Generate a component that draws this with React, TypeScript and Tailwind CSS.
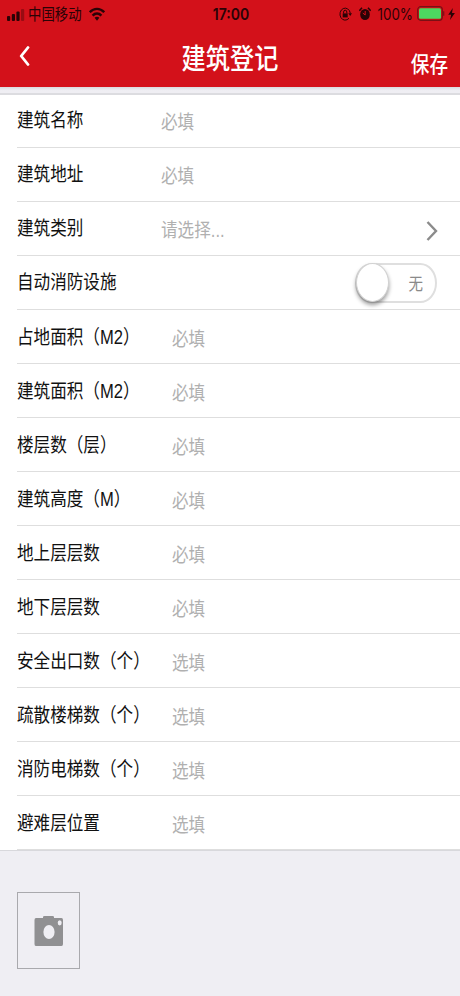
import { useState } from 'react';

const fields = [
	{ label: '建筑名称', hint: '必填' },
	{ label: '建筑地址', hint: '必填' },
	{ label: '建筑类别', hint: '请选择...', type: 'select' },
	{ label: '自动消防设施', hint: '', type: 'switch' },
	{ label: '占地面积（M2）', hint: '必填', wide: true },
	{ label: '建筑面积（M2）', hint: '必填', wide: true },
	{ label: '楼层数（层）', hint: '必填', wide: true },
	{ label: '建筑高度（M）', hint: '必填', wide: true },
	{ label: '地上层层数', hint: '必填', wide: true },
	{ label: '地下层层数', hint: '必填', wide: true },
	{ label: '安全出口数（个）', hint: '选填', wide: true },
	{ label: '疏散楼梯数（个）', hint: '选填', wide: true },
	{ label: '消防电梯数（个）', hint: '选填', wide: true },
	{ label: '避难层位置', hint: '选填', wide: true },
];

const StatusBar = () => (
	<div className="grid grid-cols-3 items-center h-7 pl-[7px] pr-[5px] text-[#2a0306]">
		<div className="flex items-center">
			<svg width="18" height="13" viewBox="0 0 18 13" fill="currentColor">
				<rect x="0" y="8" width="3.2" height="5" rx="1" />
				<rect x="4.8" y="6" width="3.2" height="7" rx="1" />
				<rect x="9.4" y="3.5" width="3.2" height="9.5" rx="1" />
				<rect x="14" y="1" width="3.2" height="12" rx="1" opacity="0.35" />
			</svg>
			<span className="ml-[3px] pt-[2px] text-[13.4px] leading-none scale-y-[1.2]">中国移动</span>
			<svg className="ml-[7px]" width="16" height="14" viewBox="0 0 16 14" fill="none" stroke="currentColor" strokeWidth="2.4">
				<path d="M0.8 5.2C5 0.7 11 0.7 15.2 5.2" />
				<path d="M3.6 8.6C6.2 5.8 9.8 5.8 12.4 8.6" />
				<path d="M5.6 10.8C7 9.5 9 9.5 10.4 10.8L8 13.7Z" fill="currentColor" stroke="none" />
			</svg>
		</div>
		<div className="text-center text-[14px] leading-none font-semibold font-['Inter'] scale-y-[1.15]">17:00</div>
		<div className="flex items-center justify-end">
			<svg width="13" height="14" viewBox="0 0 13 14" fill="none" stroke="currentColor" strokeWidth="1">
				<path d="M10 11.2A5.2 6 0 1 1 11.3 6.2" />
				<path d="M9.3 6.2H13L11.2 9Z" fill="currentColor" stroke="none" />
				<rect x="3.7" y="6.4" width="5" height="4" fill="currentColor" stroke="none" />
				<path d="M4.6 6.5V5a1.6 1.8 0 0 1 3.2 0v1.5" />
			</svg>
			<svg className="ml-[7px]" width="12" height="14" viewBox="0 0 12 14" fill="currentColor">
				<ellipse cx="6" cy="7.5" rx="4.8" ry="5.6" />
				<path d="M0.3 3.8L3 0.8M11.7 3.8L9 0.8" stroke="currentColor" strokeWidth="1.6" />
				<path d="M6.2 4V8L3.8 6" fill="none" stroke="#d3111a" strokeWidth="1" />
			</svg>
			<span className="ml-[6px] text-[13.4px] font-['Inter'] scale-y-[1.15]">100%</span>
			<svg className="ml-[4px]" width="28" height="15" viewBox="0 0 28 15">
				<rect x="0.7" y="0.7" width="24.6" height="13.6" rx="3" fill="none" stroke="#7a1015" strokeWidth="1.2" />
				<rect x="2" y="2.2" width="22" height="10.6" rx="1.5" fill="#4cd760" />
				<path d="M26.7 5.2v4.6" stroke="#7a1015" strokeWidth="1.2" />
			</svg>
			<svg className="ml-[3px]" width="7" height="12" viewBox="0 0 7 12" fill="currentColor">
				<path d="M4.8 0L0.2 6.8H3.1L2 12L6.9 5H4Z" />
			</svg>
		</div>
	</div>
);

const Header = () => (
	<header className="h-[87px] bg-[#d3111a]">
		<StatusBar />
		<div className="grid grid-cols-3 items-center h-[59px] px-[12px] text-white">
			<button className="justify-self-start pl-[7px] pb-[3px]">
				<svg width="11" height="20" viewBox="0 0 11 20" fill="none" stroke="currentColor" strokeWidth="2.8" strokeLinecap="round" strokeLinejoin="round">
					<path d="M9 1.5L2.2 10L9 18.5" />
				</svg>
			</button>
			<h1 className="pt-[3px] text-center text-[24.2px] leading-none font-medium whitespace-nowrap scale-y-[1.16]">建筑登记</h1>
			<button className="justify-self-end pt-[13px] text-[18.6px] leading-none font-medium scale-y-[1.16]">保存</button>
		</div>
	</header>
);

const Switch = () => {
	const [on, setOn] = useState(false);

	return (
		<button
			onClick={() => setOn(!on)}
			className={`flex items-center justify-between w-[82px] h-[40px] mr-[23px] rounded-[20px/24px] border-2 border-[#dfdfdf] text-[#8a8a8a] ${on ? 'flex-row-reverse' : ''}`}
		>
			<span className="w-[33px] h-[39px] -ml-[1px] shrink-0 rounded-[50%] bg-white border border-[#d2d2d2] shadow-[0_3px_4px_rgba(0,0,0,0.4)]" />
			<span className="mr-[12px] pt-[3px] text-[14.5px] leading-none scale-y-[1.2]">{on ? '有' : '无'}</span>
		</button>
	);
};

const App = () => {
	return (
		<div className="flex flex-col h-[996px] w-[460px] overflow-hidden bg-[#efeef3] font-['Liberation_Sans','Noto_Sans_CJK_SC',sans-serif]">
			<Header />
			<div className="h-[8px] shrink-0 bg-linear-to-b from-[#d9d9dc] to-[#efeef3] to-60% border-b-2 border-[#dcdce0]" />
			<main className="bg-white border-b border-[#d8d8dc]">
				{fields.map((field) => (
					<div key={field.label} className="pl-[17px] h-[53px] not-first:h-[54px]">
						<div className="flex items-center h-full border-b border-[#dedede]">
							<span className={`shrink-0 text-[16.6px] leading-none text-[#111] whitespace-nowrap ${field.wide ? 'w-[155px] pt-[3px]' : 'w-[144px] pt-[1px]'}`}>
								<span className="inline-block scale-y-[1.18]">{field.label}</span>
							</span>
							<span className={`flex-1 text-[16.6px] leading-none text-[#b0b0b0] ${field.wide ? 'pt-[7px]' : 'pt-[5px]'}`}>
								<span className="inline-block scale-y-[1.18]">{field.hint}</span>
							</span>
							{field.type === 'select' && (
								<svg className="mr-[22px] mt-[5px]" width="12" height="20" viewBox="0 0 12 20" fill="none" stroke="#8b8b8b" strokeWidth="2.4">
									<path d="M1.5 1L10 10L1.5 19" />
								</svg>
							)}
							{field.type === 'switch' && <Switch />}
						</div>
					</div>
				))}
			</main>
			<div className="pt-[41px] pl-[17px]">
				<button className="flex items-center justify-center w-[63px] h-[77px] border border-[#a9a9ad]">
					<svg width="30" height="32" viewBox="0 0 30 32">
						<path
							fill="#909092"
							fillRule="evenodd"
							d="M2 3H9V2Q9 1 10.5 1H18.5Q20 1 20 2V3H27.5Q29 3 29 5V29Q29 31 27.5 31H1.8Q0.5 31 0.5 29V5Q0.5 3 2 3ZM15 10A5.6 7 0 1 0 15 24A5.6 7 0 1 0 15 10ZM25.7 5.2A2 2.6 0 1 0 25.7 10.4A2 2.6 0 1 0 25.7 5.2Z"
						/>
					</svg>
				</button>
			</div>
		</div>
	);
};

export default App;
